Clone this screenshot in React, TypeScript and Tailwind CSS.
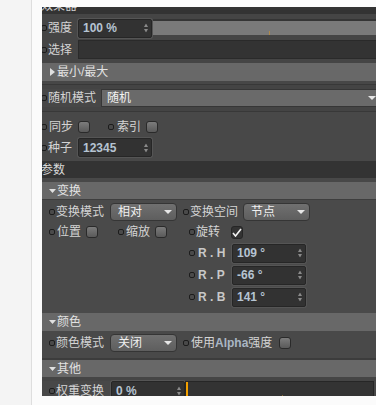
import React from "react";

const Dot = ({ className = "" }: { className?: string }) => (
  <span className={`w-[6px] h-[6px] shrink-0 rounded-[2px] border border-[#1c1c1c] ${className}`} />
);

const Label = ({ children, className = "" }: { children: React.ReactNode; className?: string }) => (
  <span className={`shrink-0 whitespace-nowrap text-[12px] leading-none text-[#d4d4d4] ${className}`}>
    {children}
  </span>
);

const Spinner = () => (
  <svg width="4" height="9" viewBox="0 0 4 9" className="absolute right-[3px] top-1/2 -translate-y-1/2">
    <polygon points="0,3.5 2,0 4,3.5" fill="#8a8a8a" />
    <polygon points="0,5.5 2,9 4,5.5" fill="#8a8a8a" />
  </svg>
);

const NumField = ({ value, className = "" }: { value: string; className?: string }) => (
  <div
    className={`relative flex h-[19px] w-[74px] shrink-0 items-center rounded-[2px] border border-[#262626] bg-[#323232] pl-[4px] text-[12px] font-bold leading-none text-[#b6c4d2] shadow-[0_0_0_1px_#555] ${className}`}
  >
    {value}
    <Spinner />
  </div>
);

const DownTri = ({ className = "" }: { className?: string }) => (
  <svg width="8" height="4" viewBox="0 0 8 4" className={className}>
    <polygon points="0,0 8,0 4,4" fill="#e6e6e6" />
  </svg>
);

const Dropdown = ({ value, className = "" }: { value: string; className?: string }) => (
  <div
    className={`flex h-[18px] shrink-0 items-center justify-between rounded-[4px] border border-[#353535] bg-linear-to-b from-[#707070] to-[#5e5e5e] pl-[7px] pr-[4px] text-[12px] leading-none text-[#f0f0f0] ${className}`}
  >
    <span>{value}</span>
    <DownTri />
  </div>
);

const Check = ({ checked = false }: { checked?: boolean }) =>
  checked ? (
    <span className="flex h-[13px] w-[12px] shrink-0 items-center justify-center rounded-[3px] border border-[#262626] bg-[#333]">
      <svg width="10" height="9" viewBox="0 0 10 9">
        <path d="M1 5 L3.5 8 L9 1" stroke="#f2f2f2" strokeWidth="1.6" fill="none" />
      </svg>
    </span>
  ) : (
    <span className="h-[12px] w-[12px] shrink-0 rounded-[3px] border border-[#2a2a2a] bg-linear-to-b from-[#7c7c7c] to-[#5a5a5a]" />
  );

const GroupHeader = ({ title, open = true, h = "h-[17px]" }: { title: string; open?: boolean; h?: string }) => (
  <div className={`flex ${h} shrink-0 items-center bg-[#686868] pl-[7px] text-[12px] leading-none text-[#e2e2e2]`}>
    {open ? (
      <svg width="7" height="4" viewBox="0 0 7 4" className="mr-[1px]">
        <polygon points="0,0 7,0 3.5,4" fill="#e0e0e0" />
      </svg>
    ) : (
      <svg width="5" height="8" viewBox="0 0 5 8" className="ml-[1px] mr-[2px]">
        <polygon points="0,0 5,4 0,8" fill="#e0e0e0" />
      </svg>
    )}
    <span>{title}</span>
  </div>
);

export default function App() {
  return (
    <div className="flex h-[405px] w-[376px] overflow-hidden bg-[#fbfbfb] font-['Liberation_Sans','Noto_Sans_CJK_SC',sans-serif]">
      <div className="w-[32px] shrink-0 border-r border-[#dedede] bg-[#f4f4f4]" />
      <div className="pl-[10px] pt-[7px]">
        <div className="flex h-[389px] w-[334px] flex-col overflow-hidden bg-[#484848]">
          {/* title strip, clipped */}
          <div className="h-[7px] shrink-0 overflow-hidden bg-[#333]">
            <div className="-mt-[7px] ml-[-1px] text-[12px] leading-[12px] text-[#cfcfcf]">效果器</div>
          </div>

          <div className="shrink-0 bg-[#454545]">
            <div className="h-[3px]" />
            <div className="flex h-[22px] items-center">
              <Dot className="ml-[-1px]" />
              <Label className="ml-[1px] w-[30px]">强度</Label>
              <NumField value="100 %" />
              <div className="relative ml-[1px] h-[16px] flex-1 self-start mt-[2px] border-t-2 border-[#353535] bg-[#7a7a7a]">
                <span className="absolute bottom-0 left-[116px] h-[4px] w-[1px] bg-[#b08a4a]" />
              </div>
            </div>
            <div className="flex h-[21px] items-center">
              <Dot className="ml-[-1px]" />
              <Label className="ml-[1px] w-[30px]">选择</Label>
              <div className="h-[19px] flex-1 -mr-[2px] border border-[#2a2a2a] bg-[#333]" />
            </div>
            <div className="h-[3px]" />
          </div>

          <GroupHeader title="最小/最大" open={false} h="h-[18px]" />

          <div className="shrink-0 bg-[#474747]">
            <div className="h-[3px]" />
            <div className="h-[1px] bg-[#383838]" />
            <div className="h-[4px] bg-[#444]" />
            <div className="flex h-[18px] items-center">
              <Dot className="ml-[-1px]" />
              <Label className="ml-[1px] w-[53px]">随机模式</Label>
              <div className="flex h-[18px] flex-1 items-center justify-between -mr-[1px] border-y border-l border-[#363636] bg-[#6a6a6a] pl-[5px] pr-[1px] text-[12px] leading-none text-[#f2f2f2]">
                <span>随机</span>
                <DownTri />
              </div>
            </div>
            <div className="h-[4px] bg-[#444]" />
            <div className="h-[1px] bg-[#383838]" />
          </div>

          <div className="shrink-0 bg-[#484848] pb-[3px] pt-[4px]">
            <div className="flex h-[21px] items-center">
              <Dot className="ml-[-1px]" />
              <Label className="ml-[2px] w-[29px]">同步</Label>
              <Check />
              <Dot className="ml-[18px]" />
              <Label className="ml-[3px] w-[29px]">索引</Label>
              <Check />
            </div>
            <div className="flex h-[21px] items-center">
              <Dot className="ml-[-1px]" />
              <Label className="ml-[1px] w-[30px]">种子</Label>
              <NumField value="12345" />
            </div>
          </div>

          <div className="flex h-[17px] shrink-0 items-center bg-[#333] text-[12px] leading-none text-[#d8d8d8]">
            <span className="ml-[-1px]">参数</span>
          </div>
          <div className="h-[4px] shrink-0 bg-[#484848]" />

          <GroupHeader title="变换" />

          <div className="shrink-0 border-t border-[#3e3e3e] bg-[#4a4a4a] pb-[5px] pt-[2px]">
            <div className="flex h-[20px] items-center pl-[7px]">
              <Dot />
              <Label className="ml-[1px] w-[54px]">变换模式</Label>
              <Dropdown value="相对" className="w-[67px]" />
              <Dot className="ml-[6px]" />
              <Label className="ml-[1px] w-[53px]">变换空间</Label>
              <Dropdown value="节点" className="w-[67px]" />
            </div>
            <div className="flex h-[20px] items-center pl-[7px]">
              <Dot />
              <Label className="ml-[2px] w-[29px]">位置</Label>
              <Check />
              <Dot className="ml-[20px]" />
              <Label className="ml-[2px] w-[29px]">缩放</Label>
              <Check />
              <Dot className="ml-[22px]" />
              <Label className="ml-[1px] w-[35px]">旋转</Label>
              <Check checked />
            </div>
            {[
              ["R . H", "109 °"],
              ["R . P", "-66 °"],
              ["R . B", "141 °"],
            ].map(([k, v]) => (
              <div key={k} className="flex h-[22px] items-center pl-[147px]">
                <Dot />
                <span className="ml-[3px] w-[34px] shrink-0 whitespace-pre text-[12px] font-bold leading-none text-[#c8c8c8]">
                  {k}
                </span>
                <NumField value={v} />
              </div>
            ))}
          </div>

          <GroupHeader title="颜色" h="h-[18px]" />

          <div className="h-[27px] shrink-0 bg-[#494949] pt-[3px]">
            <div className="flex h-[18px] items-center pl-[7px]">
              <Dot />
              <Label className="ml-[1px] w-[54px]">颜色模式</Label>
              <Dropdown value="关闭" className="w-[67px]" />
              <Dot className="ml-[6px]" />
              <Label className="ml-[2px] w-[88px]">
                使用<span className="font-bold text-[#a9b6c4]">Alpha</span>强度
              </Label>
              <Check />
            </div>
          </div>
          <div className="h-[2px] shrink-0 bg-[#3c3c3c]" />

          <GroupHeader title="其他" />
          <div className="h-[4px] shrink-0 bg-[#454545]" />

          <div className="flex h-[19px] shrink-0 items-start pl-[7px]">
            <Dot className="mt-[7px]" />
            <Label className="ml-[1px] mt-[4px] w-[55px]">权重变换</Label>
            <NumField value="0 %" />
            <div className="relative mr-[2px] h-[19px] flex-1 border border-[#262626] bg-[#333]">
              <span className="absolute left-0 top-0 h-full w-[2px] bg-[#f2a000]" />
              <span className="absolute bottom-0 left-[96px] h-[4px] w-[1px] bg-[#8a6a30]" />
            </div>
          </div>
        </div>
      </div>
    </div>
  );
}
